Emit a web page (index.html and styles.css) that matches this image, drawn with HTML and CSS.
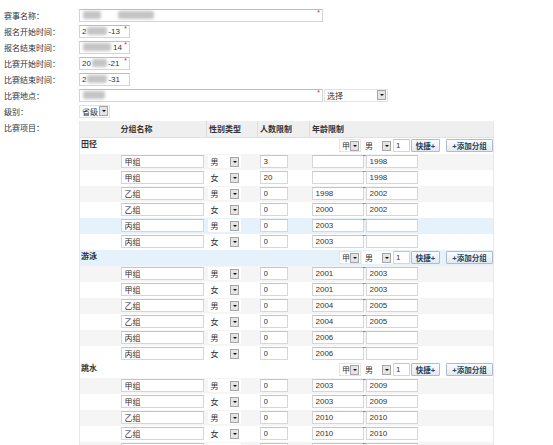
FILE: index.html
```html
<!DOCTYPE html>
<html lang="zh-CN">
<head>
<meta charset="utf-8">
<title>赛事</title>
<link rel="stylesheet" href="styles.css">
</head>
<body>
<div class="page">
  <div class="row">
    <span class="lbl">赛事名称：</span>
    <div class="field w-name"><span class="blur bn1"></span><span class="blur bn2"></span><span class="req">*</span></div>
  </div>
  <div class="row">
    <span class="lbl">报名开始时间：</span>
    <div class="field w-date"><span>2</span><span class="blur bd1"></span><span>-13</span><span class="req">*</span></div>
  </div>
  <div class="row">
    <span class="lbl">报名结束时间：</span>
    <div class="field w-date"><span class="blur bd2"></span><span>14</span><span class="req">*</span></div>
  </div>
  <div class="row">
    <span class="lbl">比赛开始时间：</span>
    <div class="field w-date"><span>20</span><span class="blur bd3"></span><span>-21</span><span class="req">*</span></div>
  </div>
  <div class="row">
    <span class="lbl">比赛结束时间：</span>
    <div class="field w-date"><span>2</span><span class="blur bd1"></span><span>-31</span></div>
  </div>
  <div class="row">
    <span class="lbl">比赛地点：</span>
    <div class="field w-name"><span class="blur bp"></span><span class="req">*</span></div>
    <div class="sel w-choose"><span class="sel-txt">选择</span><i class="arr"></i></div>
  </div>
  <div class="row">
    <span class="lbl">级别：</span>
    <div class="sel w-level"><span class="sel-txt">省级</span><i class="arr"></i></div>
  </div>
  <div class="row row-items">
    <span class="lbl">比赛项目：</span>
    <table class="items">
      <colgroup><col class="c1"><col class="c2"><col class="c3"><col class="c4"><col class="c5"></colgroup>
      <thead>
        <tr><th></th><th class="h-name">分组名称</th><th>性别类型</th><th>人数限制</th><th>年龄限制</th></tr>
      </thead>
      <tbody>
        <tr class="cat"><td colspan="5"><div class="cat-bar"><b>田径</b>
          <div class="tools"><div class="sel w-t1"><span class="sel-txt">甲</span><i class="arr"></i></div><div class="sel w-t2"><span class="sel-txt">男</span><i class="arr"></i></div><input class="in-n" value="1"><button class="btn b-quick">快捷+</button><button class="btn b-add">+添加分组</button></div></div></td></tr>
        <tr class="alt"><td></td><td><input class="in-name" value="甲组"></td><td><div class="sel w-g"><span class="sel-txt">男</span><i class="arr"></i></div></td><td><input class="in-num" value="3"></td><td><div class="age"><input class="in-age" value=""><span class="tilde">~</span><input class="in-age" value="1998"></div></td></tr>
        <tr><td></td><td><input class="in-name" value="甲组"></td><td><div class="sel w-g"><span class="sel-txt">女</span><i class="arr"></i></div></td><td><input class="in-num" value="20"></td><td><div class="age"><input class="in-age" value=""><span class="tilde">~</span><input class="in-age" value="1998"></div></td></tr>
        <tr class="alt"><td></td><td><input class="in-name" value="乙组"></td><td><div class="sel w-g"><span class="sel-txt">男</span><i class="arr"></i></div></td><td><input class="in-num" value="0"></td><td><div class="age"><input class="in-age" value="1998"><span class="tilde">~</span><input class="in-age" value="2002"></div></td></tr>
        <tr><td></td><td><input class="in-name" value="乙组"></td><td><div class="sel w-g"><span class="sel-txt">女</span><i class="arr"></i></div></td><td><input class="in-num" value="0"></td><td><div class="age"><input class="in-age" value="2000"><span class="tilde">~</span><input class="in-age" value="2002"></div></td></tr>
        <tr class="hover"><td></td><td><input class="in-name" value="丙组"></td><td><div class="sel w-g"><span class="sel-txt">男</span><i class="arr"></i></div></td><td><input class="in-num" value="0"></td><td><div class="age"><input class="in-age" value="2003"><span class="tilde">~</span><input class="in-age" value=""></div></td></tr>
        <tr><td></td><td><input class="in-name" value="丙组"></td><td><div class="sel w-g"><span class="sel-txt">女</span><i class="arr"></i></div></td><td><input class="in-num" value="0"></td><td><div class="age"><input class="in-age" value="2003"><span class="tilde">~</span><input class="in-age" value=""></div></td></tr>

        <tr class="cat hover"><td colspan="5"><div class="cat-bar"><b>游泳</b>
          <div class="tools"><div class="sel w-t1"><span class="sel-txt">甲</span><i class="arr"></i></div><div class="sel w-t2"><span class="sel-txt">男</span><i class="arr"></i></div><input class="in-n" value="1"><button class="btn b-quick">快捷+</button><button class="btn b-add">+添加分组</button></div></div></td></tr>
        <tr class="alt"><td></td><td><input class="in-name" value="甲组"></td><td><div class="sel w-g"><span class="sel-txt">男</span><i class="arr"></i></div></td><td><input class="in-num" value="0"></td><td><div class="age"><input class="in-age" value="2001"><span class="tilde">~</span><input class="in-age" value="2003"></div></td></tr>
        <tr><td></td><td><input class="in-name" value="甲组"></td><td><div class="sel w-g"><span class="sel-txt">女</span><i class="arr"></i></div></td><td><input class="in-num" value="0"></td><td><div class="age"><input class="in-age" value="2001"><span class="tilde">~</span><input class="in-age" value="2003"></div></td></tr>
        <tr class="alt"><td></td><td><input class="in-name" value="乙组"></td><td><div class="sel w-g"><span class="sel-txt">男</span><i class="arr"></i></div></td><td><input class="in-num" value="0"></td><td><div class="age"><input class="in-age" value="2004"><span class="tilde">~</span><input class="in-age" value="2005"></div></td></tr>
        <tr><td></td><td><input class="in-name" value="乙组"></td><td><div class="sel w-g"><span class="sel-txt">女</span><i class="arr"></i></div></td><td><input class="in-num" value="0"></td><td><div class="age"><input class="in-age" value="2004"><span class="tilde">~</span><input class="in-age" value="2005"></div></td></tr>
        <tr class="alt"><td></td><td><input class="in-name" value="丙组"></td><td><div class="sel w-g"><span class="sel-txt">男</span><i class="arr"></i></div></td><td><input class="in-num" value="0"></td><td><div class="age"><input class="in-age" value="2006"><span class="tilde">~</span><input class="in-age" value=""></div></td></tr>
        <tr><td></td><td><input class="in-name" value="丙组"></td><td><div class="sel w-g"><span class="sel-txt">女</span><i class="arr"></i></div></td><td><input class="in-num" value="0"></td><td><div class="age"><input class="in-age" value="2006"><span class="tilde">~</span><input class="in-age" value=""></div></td></tr>

        <tr class="cat"><td colspan="5"><div class="cat-bar"><b>跳水</b>
          <div class="tools"><div class="sel w-t1"><span class="sel-txt">甲</span><i class="arr"></i></div><div class="sel w-t2"><span class="sel-txt">男</span><i class="arr"></i></div><input class="in-n" value="1"><button class="btn b-quick">快捷+</button><button class="btn b-add">+添加分组</button></div></div></td></tr>
        <tr class="alt"><td></td><td><input class="in-name" value="甲组"></td><td><div class="sel w-g"><span class="sel-txt">男</span><i class="arr"></i></div></td><td><input class="in-num" value="0"></td><td><div class="age"><input class="in-age" value="2003"><span class="tilde">~</span><input class="in-age" value="2009"></div></td></tr>
        <tr><td></td><td><input class="in-name" value="甲组"></td><td><div class="sel w-g"><span class="sel-txt">女</span><i class="arr"></i></div></td><td><input class="in-num" value="0"></td><td><div class="age"><input class="in-age" value="2003"><span class="tilde">~</span><input class="in-age" value="2009"></div></td></tr>
        <tr class="alt"><td></td><td><input class="in-name" value="乙组"></td><td><div class="sel w-g"><span class="sel-txt">男</span><i class="arr"></i></div></td><td><input class="in-num" value="0"></td><td><div class="age"><input class="in-age" value="2010"><span class="tilde">~</span><input class="in-age" value="2010"></div></td></tr>
        <tr><td></td><td><input class="in-name" value="乙组"></td><td><div class="sel w-g"><span class="sel-txt">女</span><i class="arr"></i></div></td><td><input class="in-num" value="0"></td><td><div class="age"><input class="in-age" value="2010"><span class="tilde">~</span><input class="in-age" value="2010"></div></td></tr>
        <tr class="alt"><td></td><td><input class="in-name" value="丙组"></td><td><div class="sel w-g"><span class="sel-txt">男</span><i class="arr"></i></div></td><td><input class="in-num" value="0"></td><td><div class="age"><input class="in-age" value="2011"><span class="tilde">~</span><input class="in-age" value=""></div></td></tr>
      </tbody>
    </table>
  </div>
</div>
</body>
</html>
```

FILE: styles.css
```css
* { box-sizing: border-box; }
html, body { margin: 0; padding: 0; background: #fff; }
body {
  font-family: "Liberation Sans", "Noto Sans CJK SC", sans-serif;
  font-size: 8px;
  color: #333;
  overflow: hidden;
  height: 445px;
}
.page { padding-top: 7px; }
.row { display: flex; align-items: center; height: 16px; }
.lbl { width: 79px; padding-left: 4px; white-space: nowrap; }
.row-items { align-items: flex-start; height: auto; margin-top: 2px; }
.row-items .lbl { line-height: 16px; }

.field {
  position: relative;
  display: flex;
  align-items: center;
  height: 13px;
  border: 1px solid #d4d4d4;
  border-top-color: #bdbdbd;
  background: #fff;
  padding-left: 2px;
  white-space: nowrap;
}
.w-name { width: 244px; }
.w-date { width: 51px; }
.req {
  position: absolute;
  right: 2px;
  top: -1px;
  color: #e0262b;
  font-size: 7px;
  line-height: 7px;
}
.blur { display: inline-block; height: 8px; background: #c4c4c4; filter: blur(1.4px); border-radius: 2px; }
.bn1 { width: 18px; margin-left: 1px; }
.bn2 { width: 36px; margin-left: 17px; }
.bd1 { width: 20px; margin: 0 1px; }
.bd2 { width: 28px; margin: 0 2px 0 1px; }
.bd3 { width: 15px; margin: 0 1px; }
.bp { width: 22px; margin-left: 1px; }

.sel {
  display: inline-flex;
  align-items: center;
  height: 13px;
  border: 1px solid #e2e2e2;
  background: #fff;
  padding-right: 1px;
}
.sel-txt { flex: 1; padding-left: 2px; white-space: nowrap; }
.arr {
  position: relative;
  width: 9px;
  height: 10px;
  border: 1px solid #a6a6a6;
  background: #e4e4e4;
}
.arr::after {
  content: "";
  position: absolute;
  left: 2px;
  top: 3px;
  border-left: 2px solid transparent;
  border-right: 2px solid transparent;
  border-top: 2px solid #111;
}
.w-choose { width: 64px; margin-left: 1px; }
.w-level { width: 31px; }
.w-g { width: 33px; margin-left: 1px; border-color: transparent; }
.w-t1 { width: 22px; border-color: #e6e6e6; }
.w-t2 { width: 31px; margin-left: 1px; border-color: transparent; }

.items {
  border-collapse: collapse;
  table-layout: fixed;
  width: 414px;
  border-left: 1px solid #e8e8e8;
  border-right: 1px solid #e8e8e8;
}
.c1 { width: 38px; }
.c2 { width: 89px; }
.c3 { width: 51px; }
.c4 { width: 52px; }
.c5 { width: 184px; }
.items th {
  height: 16px;
  padding: 0 0 0 2px;
  text-align: left;
  font-weight: bold;
  background: #efefef;
  border-bottom: 1px solid #e0e0e0;
  border-left: 1px solid #dedede;
  white-space: nowrap;
}
.items th:first-child { border-left: none; }
.items th.h-name { border-left: none; padding-left: 3px; }
.items td { height: 16px; padding: 0; vertical-align: middle; }
.items tr.alt td { background: #f5f5f5; }
.items tr.hover td { background: #e5f2fb; }

.cat-bar { display: flex; align-items: center; justify-content: space-between; height: 16px; padding-left: 1px; }
.cat-bar b { font-weight: bold; align-self: flex-start; line-height: 13px; }
.tools { display: flex; align-items: center; }

input {
  font: inherit;
  color: #333;
  height: 13px;
  margin: 0;
  padding: 0 0 0 3px;
  border: 1px solid #d6d6d6;
  border-top-color: #c4c4c4;
  background: #fff;
  display: block;
  outline: none;
}
.in-name { width: 83px; margin-left: 3px; }
.in-num { width: 28px; margin-left: 2px; }
.in-n { width: 17px; padding-left: 2px; }
.age { display: flex; align-items: flex-start; margin-left: 2px; }
.in-age { width: 52px; }
.tilde {
  width: 2px;
  font-size: 7px;
  line-height: 4px;
  margin-top: -1px;
  overflow: visible;
  color: #444;
  text-indent: -1px;
}

.btn {
  height: 13px;
  padding: 0;
  font: inherit;
  font-size: 7.5px;
  font-weight: bold;
  color: #27415f;
  border: 1px solid #aebccb;
  border-radius: 1px;
  background: linear-gradient(#fbfcfe, #e3e9f0);
  white-space: nowrap;
}
.b-quick { width: 29px; margin-left: 1px; }
.b-add { width: 47px; margin-left: 6px; }
```
